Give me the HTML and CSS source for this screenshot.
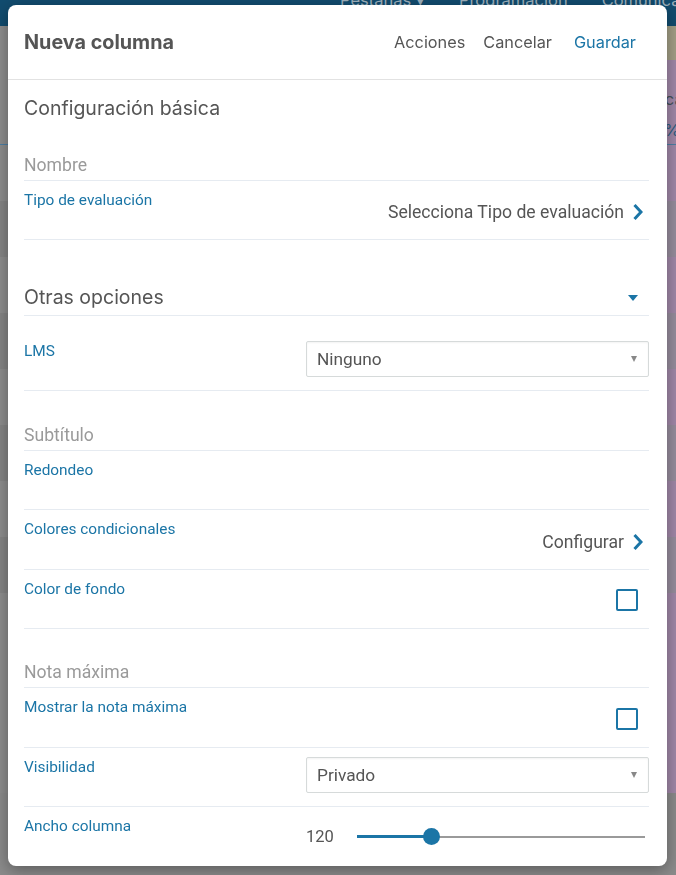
FILE: index.html
```html
<!DOCTYPE html>
<html lang="es">
<head>
    <meta charset="UTF-8">
    <meta name="viewport" content="width=device-width, initial-scale=1.0">
    <title>Nueva columna</title>
    <link rel="stylesheet" href="styles.css">
</head>
<body>
    <div class="app">
        <div class="topbar">
            <span class="tab">Pestañas ▾</span>
            <span class="tab">Programación</span>
            <span class="tab">Comunicación</span>
        </div>
        <div class="sheet">
            <div class="band band-olive"></div>
            <div class="band band-head"><span>Práctica</span></div>
            <div class="band band-sub"><span>%</span></div>
            <div class="band"></div>
            <div class="band band-dark"></div>
            <div class="band"></div>
            <div class="band band-dark"></div>
            <div class="band"></div>
            <div class="band band-dark"></div>
            <div class="band"></div>
            <div class="band band-dark"></div>
            <div class="band band-grey"></div>
        </div>
    </div>

    <div class="modal">
        <div class="modal-header">
            <h1 class="modal-title">Nueva columna</h1>
            <div class="actions">
                <button class="action">Acciones</button>
                <button class="action">Cancelar</button>
                <button class="action primary">Guardar</button>
            </div>
        </div>

        <div class="modal-body">
            <h2 class="section">Configuración básica</h2>

            <div class="row input-row tall"><span class="placeholder">Nombre</span></div>

            <div class="row">
                <span class="label">Tipo de evaluación</span>
                <a class="link-value">Selecciona Tipo de evaluación
                    <svg class="chevron" viewBox="0 0 11 18"><path d="M2.5 2 L9 9 L2.5 16"/></svg>
                </a>
            </div>

            <div class="section section-toggle">
                <span>Otras opciones</span>
                <span class="caret"></span>
            </div>

            <div class="row row-lms">
                <span class="label">LMS</span>
                <div class="select"><span>Ninguno</span><span class="select-arrow"></span></div>
            </div>

            <div class="row input-row tall"><span class="placeholder">Subtítulo</span></div>

            <div class="row">
                <span class="label">Redondeo</span>
            </div>

            <div class="row tall">
                <span class="label">Colores condicionales</span>
                <a class="link-value">Configurar
                    <svg class="chevron" viewBox="0 0 11 18"><path d="M2.5 2 L9 9 L2.5 16"/></svg>
                </a>
            </div>

            <div class="row">
                <span class="label">Color de fondo</span>
                <span class="checkbox"></span>
            </div>

            <div class="row input-row"><span class="placeholder">Nota máxima</span></div>

            <div class="row tall">
                <span class="label">Mostrar la nota máxima</span>
                <span class="checkbox"></span>
            </div>

            <div class="row">
                <span class="label">Visibilidad</span>
                <div class="select"><span>Privado</span><span class="select-arrow"></span></div>
            </div>

            <div class="row row-last">
                <span class="label">Ancho columna</span>
                <div class="range">
                    <span class="range-value">120</span>
                    <div class="track">
                        <div class="track-fill" style="width: 75px"></div>
                        <div class="thumb"></div>
                    </div>
                </div>
            </div>
        </div>
    </div>
</body>
</html>
```

FILE: styles.css
```css
* {
    box-sizing: border-box;
}

body {
    margin: 0;
    height: 875px;
    overflow: hidden;
    background-color: #8b8b8b;
    font-family: Roboto, "Liberation Sans", sans-serif;
}

/* app behind the dialog (dimmed) */
.app {
    height: 100%;
}

.topbar {
    height: 26px;
    background-color: #124c6f;
    display: flex;
    gap: 34px;
    padding-left: 340px;
    overflow: hidden;
}

.tab {
    font-family: Inter, sans-serif;
    font-size: 16.5px;
    line-height: 20px;
    margin-top: -10px;
    color: #9fb1bd;
    white-space: nowrap;
}

.sheet {
    display: flex;
    flex-direction: column;
}

.band {
    height: 56px;
    background: linear-gradient(to right, #8d8d8d 660px, #a188a8 660px);
}

.band-dark {
    background: linear-gradient(to right, #858585 660px, #978d9d 660px);
}

.band-grey {
    height: 200px;
    background-color: #8c8c8c;
}

.band-olive {
    height: 34px;
    background: linear-gradient(to right, #8e8e8e 660px, #a39f86 660px);
}

.band-head,
.band-sub {
    height: 55px;
    padding-left: 620px;
    padding-top: 28px;
    font-family: Inter, sans-serif;
    font-size: 16.5px;
    line-height: 22px;
    color: #44515a;
    white-space: nowrap;
    overflow: hidden;
}

.band-sub {
    height: 30px;
    padding-top: 4px;
    padding-left: 664px;
    border-bottom: 1px solid #4c7fa5;
    color: #2d5d80;
}

/* dialog */
.modal {
    position: fixed;
    left: 8px;
    top: 5px;
    width: 659px;
    height: 861px;
    background-color: #fff;
    border-radius: 8px;
    overflow: hidden;
    box-shadow: 0 4px 16px rgba(0, 0, 0, 0.35);
    display: flex;
    flex-direction: column;
}

.modal-header {
    height: 75px;
    flex-shrink: 0;
    border-bottom: 1px solid #e2e2e2;
    display: flex;
    align-items: center;
    justify-content: space-between;
    padding: 0 31px 0 16px;
}

.modal-title {
    margin: 0;
    font-family: Inter, sans-serif;
    font-size: 19.8px;
    font-weight: 700;
    color: #555;
}

.actions {
    display: flex;
    gap: 18px;
}

.action {
    background: none;
    border: none;
    padding: 0;
    font-family: Inter, sans-serif;
    font-size: 16.3px;
    color: #555;
    cursor: pointer;
}

.action.primary {
    margin-left: 4px;
    color: #1b75a6;
}

.modal-body {
    padding: 0 18px 0 16px;
}

.section {
    margin: 0;
    padding-top: 17px;
    height: 41px;
    font-family: Inter, sans-serif;
    font-size: 19.5px;
    font-weight: 400;
    line-height: 22px;
    color: #555;
}

.section-toggle {
    height: 76px;
    padding-top: 46px;
    border-bottom: 1px solid #e6ebf1;
    display: flex;
    justify-content: space-between;
}

.caret {
    width: 0;
    height: 0;
    margin: 9px 11px 0 0;
    border-left: 5px solid transparent;
    border-right: 5px solid transparent;
    border-top: 6px solid #1b75a6;
}

.row {
    height: 59px;
    padding: 10px 0;
    border-bottom: 1px solid #e6ebf1;
    display: flex;
    justify-content: space-between;
    align-items: flex-start;
}

.row.tall {
    height: 60px;
}

.row-lms {
    height: 75px;
    padding-top: 26px;
}

.row-last {
    height: 60px;
    border-bottom: none;
}

.label {
    font-size: 15.4px;
    line-height: 18px;
    color: #1b75a6;
}

.input-row {
    align-items: flex-end;
    padding: 0 0 5px;
}

.placeholder {
    font-size: 17.6px;
    line-height: 20px;
    color: #9a9a9a;
}

.link-value {
    align-self: center;
    margin-top: 4px;
    display: flex;
    align-items: center;
    gap: 8px;
    font-size: 17.6px;
    color: #555;
    margin-right: 6px;
}

.chevron {
    width: 11px;
    height: 18px;
    fill: none;
    stroke: #1b75a6;
    stroke-width: 3;
}

.checkbox {
    align-self: center;
    width: 22px;
    height: 22px;
    margin: 2px 11px 0 0;
    border: 2px solid #1b75a6;
    border-radius: 2px;
}

.select {
    width: 343px;
    height: 36px;
    margin-top: -1px;
    border: 1px solid #d6dada;
    border-radius: 2px;
    box-shadow: inset 0 1px 2px rgba(0, 0, 0, 0.05);
    display: flex;
    align-items: center;
    justify-content: space-between;
    padding: 0 11px 0 10px;
    font-size: 17.3px;
    color: #555;
}

.select-arrow {
    width: 0;
    height: 0;
    border-left: 3.5px solid transparent;
    border-right: 3.5px solid transparent;
    border-top: 6px solid #888;
}

.range {
    width: 343px;
    margin-top: 10px;
    display: flex;
    align-items: center;
    gap: 23px;
    padding-right: 4px;
}

.range-value {
    font-size: 16.5px;
    color: #555;
}

.track {
    flex: 1;
    height: 2px;
    background-color: #9a9a9a;
    display: flex;
    align-items: center;
}

.track-fill {
    height: 3px;
    background-color: #1b75a6;
}

.thumb {
    width: 17px;
    height: 17px;
    margin-left: -9px;
    border-radius: 50%;
    background-color: #1b75a6;
}
```
